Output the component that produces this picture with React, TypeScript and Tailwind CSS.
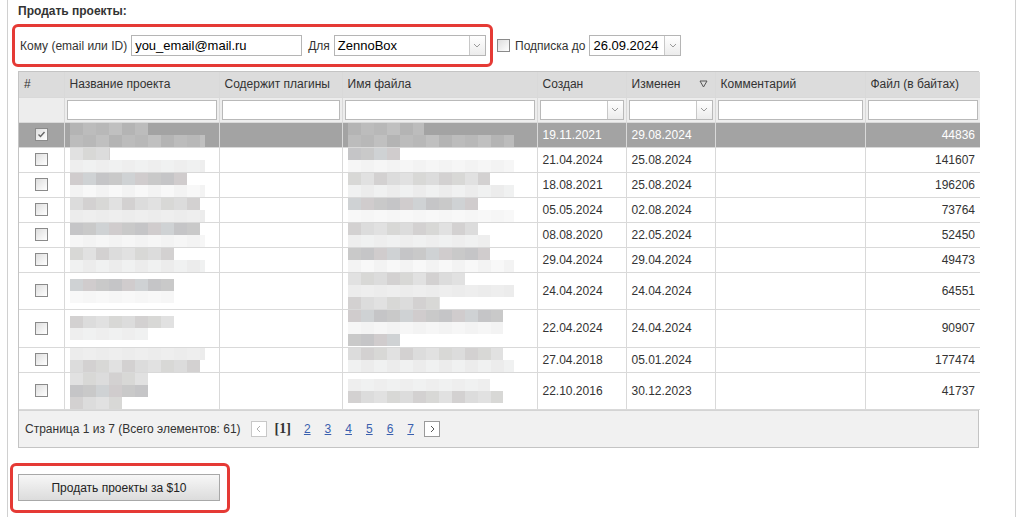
import React from "react";

type Line = { w: number; faint?: boolean };

const rows: {
  created: string;
  modified: string;
  size: string;
  h: string;
  name: Line[];
  file: Line[];
  selected?: boolean;
}[] = [
  { created: "19.11.2021", modified: "29.08.2024", size: "44836", h: "h-[25px]", name: [{ w: 78 }, { w: 135 }], file: [{ w: 76 }, { w: 166 }], selected: true },
  { created: "21.04.2024", modified: "25.08.2024", size: "141607", h: "h-[25px]", name: [{ w: 40 }, { w: 135, faint: true }], file: [{ w: 52 }, { w: 166, faint: true }] },
  { created: "18.08.2021", modified: "25.08.2024", size: "196206", h: "h-[25px]", name: [{ w: 117 }, { w: 135, faint: true }], file: [{ w: 142 }, { w: 166, faint: true }] },
  { created: "05.05.2024", modified: "02.08.2024", size: "73764", h: "h-[25px]", name: [{ w: 130 }, { w: 135, faint: true }], file: [{ w: 130 }, { w: 166, faint: true }] },
  { created: "08.08.2020", modified: "22.05.2024", size: "52450", h: "h-[25px]", name: [{ w: 130 }, { w: 135, faint: true }], file: [{ w: 130 }, { w: 142, faint: true }] },
  { created: "29.04.2024", modified: "29.04.2024", size: "49473", h: "h-[25px]", name: [{ w: 104 }, { w: 135, faint: true }], file: [{ w: 142 }, { w: 166, faint: true }] },
  { created: "24.04.2024", modified: "24.04.2024", size: "64551", h: "h-[37px]", name: [{ w: 104 }, { w: 104, faint: true }], file: [{ w: 117 }, { w: 166, faint: true }, { w: 92 }] },
  { created: "22.04.2024", modified: "24.04.2024", size: "90907", h: "h-[38px]", name: [{ w: 104 }, { w: 78, faint: true }], file: [{ w: 155 }, { w: 155, faint: true }, { w: 52 }] },
  { created: "27.04.2018", modified: "05.01.2024", size: "177474", h: "h-[25px]", name: [{ w: 135, faint: true }, { w: 130 }], file: [{ w: 155 }, { w: 166, faint: true }] },
  { created: "22.10.2016", modified: "30.12.2023", size: "41737", h: "h-[36px]", name: [{ w: 78 }, { w: 78 }, { w: 52 }], file: [{ w: 142, faint: true }, { w: 155 }] },
];

const shades = ["#c9c9c9", "#d3d1d1", "#cfd2d4", "#d8d8d6", "#c5c5c7", "#dcdcdc", "#d0cccd", "#e1e1e1"];
const faintShades = ["#eeeeee", "#f3f3f3", "#ececec", "#f6f6f6", "#f0f1f1", "#f8f8f8"];

function Blur({ lines, seed, dark }: { lines: Line[]; seed: number; dark?: boolean }) {
  return (
    <div className="flex flex-col">
      {lines.map((l, i) => {
        const n = Math.ceil(l.w / 13);
        return (
          <div key={i} className="flex h-[12px]">
            {Array.from({ length: n }).map((_, j) => {
              const pal = l.faint ? faintShades : shades;
              let c = pal[(seed * 7 + i * 5 + j * 3 + ((j * j) % 4)) % pal.length];
              if (dark) c = ["#b4b4b4", "#bcbcbc", "#b8b8b8", "#c0c0c0"][(j + i) % 4];
              const w = j === n - 1 ? l.w - 13 * (n - 1) : 13;
              return <div key={j} style={{ width: w, background: c }} />;
            })}
          </div>
        );
      })}
    </div>
  );
}

function Check({ checked }: { checked?: boolean }) {
  return (
    <div className="w-[13px] h-[13px] border border-[#8a8a8a] bg-gradient-to-br from-[#dedede] to-white flex items-center justify-center mx-auto">
      {checked && (
        <svg width="9" height="9" viewBox="0 0 9 9">
          <path d="M1.5 4.5 L3.5 6.5 L7.5 2" stroke="#666" strokeWidth="1.4" fill="none" />
        </svg>
      )}
    </div>
  );
}

function DropBtn() {
  return (
    <div className="w-[16px] h-full border-l border-[#c8c8c8] bg-gradient-to-b from-white to-[#ececec] flex items-center justify-center">
      <svg width="8" height="5" viewBox="0 0 8 5">
        <path d="M1 1 L4 4 L7 1" stroke="#9a9a9a" strokeWidth="1" fill="none" />
      </svg>
    </div>
  );
}

const cell = "border border-[#d9d9d9] px-[5px]";

export default function App() {
  return (
    <div className="w-[1024px] h-[517px] bg-white overflow-hidden font-['Liberation_Sans',Arial,sans-serif] text-[12px] text-[#333]">
      <div className="ml-[7px] w-[1009px] h-full border-x border-[#d0d0d0] pt-[4px] pl-[4px]">
        <div className="pl-[6px] font-bold text-[12px] leading-[14px] text-[#333]">Продать проекты:</div>

        <div className="flex items-center mt-[6px]">
          <div className="w-[481px] h-[43px] border-[3px] border-[#e53a35] rounded-[6px] flex items-center pl-[5px] gap-[4px]">
            <span>Кому (email или ID)</span>
            <div className="w-[171px] h-[21px] border border-[#b5b5b5] flex items-center px-[3px] text-[13px] text-black">you_email@mail.ru</div>
            <span className="ml-[2px]">Для</span>
            <div className="w-[152px] h-[21px] border border-[#b5b5b5] flex items-center text-[13px] text-black">
              <span className="flex-1 px-[3px]">ZennoBox</span>
              <DropBtn />
            </div>
          </div>
          <div className="ml-[4px] w-[13px] h-[13px] border border-[#8a8a8a] bg-gradient-to-br from-[#dedede] to-white" />
          <span className="ml-[5px]">Подписка до</span>
          <div className="ml-[4px] w-[92px] h-[21px] border border-[#b5b5b5] flex items-center text-[13px] text-black">
            <span className="flex-1 px-[3px]">26.09.2024</span>
            <DropBtn />
          </div>
        </div>

        <div className="mt-[4px] ml-[6px] w-[961px] border border-[#c4c4c4]">
          <table className="w-full border-collapse table-fixed">
            <colgroup>
              <col className="w-[45px]" />
              <col className="w-[155px]" />
              <col className="w-[123px]" />
              <col className="w-[195px]" />
              <col className="w-[89px]" />
              <col className="w-[89px]" />
              <col className="w-[150px]" />
              <col className="w-[115px]" />
            </colgroup>
            <thead>
              <tr className="h-[25px] bg-[#dcdcdc] text-left">
                <th className={`${cell} border-t-0 border-l-0 font-normal`}>#</th>
                <th className={`${cell} border-t-0 font-normal`}>Название проекта</th>
                <th className={`${cell} border-t-0 font-normal`}>Содержит плагины</th>
                <th className={`${cell} border-t-0 font-normal`}>Имя файла</th>
                <th className={`${cell} border-t-0 font-normal`}>Создан</th>
                <th className={`${cell} border-t-0 font-normal`}>
                  <div className="flex items-center justify-between">
                    <span>Изменен</span>
                    <svg width="9" height="8" viewBox="0 0 9 8" className="mr-[2px]">
                      <path d="M1 1 H8 L4.5 7 Z" stroke="#555" strokeWidth="1" fill="none" />
                    </svg>
                  </div>
                </th>
                <th className={`${cell} border-t-0 font-normal`}>Комментарий</th>
                <th className={`${cell} border-t-0 border-r-0 font-normal`}>Файл (в байтах)</th>
              </tr>
              <tr className="h-[25px] bg-[#ededed]">
                <td className={`${cell} border-l-0`} />
                {[0, 1, 2].map((i) => (
                  <td key={i} className="border border-[#d9d9d9] px-[2px]">
                    <div className="h-[20px] bg-white border border-[#b9b9b9]" />
                  </td>
                ))}
                {[0, 1].map((i) => (
                  <td key={i} className="border border-[#d9d9d9] px-[2px]">
                    <div className="h-[20px] bg-white border border-[#b9b9b9] flex justify-end">
                      <DropBtn />
                    </div>
                  </td>
                ))}
                <td className="border border-[#d9d9d9] px-[2px]">
                  <div className="h-[20px] bg-white border border-[#b9b9b9]" />
                </td>
                <td className="border border-[#d9d9d9] border-r-0 px-[2px]">
                  <div className="h-[20px] bg-white border border-[#b9b9b9]" />
                </td>
              </tr>
            </thead>
            <tbody>
              {rows.map((r, i) => (
                <tr key={i} className={`${r.h} ${r.selected ? "bg-[#a3a3a3] text-white" : "bg-white text-[#333]"}`}>
                  <td className={`${cell} border-l-0`}>
                    <Check checked={r.selected} />
                  </td>
                  <td className={cell}>
                    <Blur lines={r.name} seed={i} dark={r.selected} />
                  </td>
                  <td className={cell} />
                  <td className={cell}>
                    <Blur lines={r.file} seed={i + 3} dark={r.selected} />
                  </td>
                  <td className={cell}>{r.created}</td>
                  <td className={cell}>{r.modified}</td>
                  <td className={cell} />
                  <td className={`${cell} border-r-0 text-right`}>{r.size}</td>
                </tr>
              ))}
            </tbody>
          </table>
          <div className="h-[37px] bg-[#f1f1f1] border-t border-[#d4d4d4] flex items-center pl-[6px] gap-[4px]">
            <span>Страница 1 из 7 (Всего элементов: 61)</span>
            <div className="ml-[6px] w-[16px] h-[16px] border border-[#c8c8c8] bg-white flex items-center justify-center">
              <svg width="5" height="8" viewBox="0 0 5 8">
                <path d="M4 1 L1 4 L4 7" stroke="#b0b0b0" strokeWidth="1" fill="none" />
              </svg>
            </div>
            <span className="ml-[4px] font-['Liberation_Serif',serif] font-bold text-[14px] text-[#333]">[1]</span>
            <div className="flex ml-[9px] gap-[14px] text-[#3a5fae] underline">
              <span>2</span>
              <span>3</span>
              <span>4</span>
              <span>5</span>
              <span>6</span>
              <span>7</span>
            </div>
            <div className="ml-[6px] w-[16px] h-[16px] border border-[#9a9a9a] bg-white flex items-center justify-center">
              <svg width="5" height="8" viewBox="0 0 5 8">
                <path d="M1 1 L4 4 L1 7" stroke="#555" strokeWidth="1" fill="none" />
              </svg>
            </div>
          </div>
        </div>

        <div className="mt-[15px] -ml-[2px] w-[220px] h-[50px] border-[3px] border-[#e53a35] rounded-[6px] flex items-center pl-[5px]">
          <div className="w-[202px] h-[27px] border border-[#a8a8a8] bg-gradient-to-b from-[#f7f7f7] to-[#dcdcdc] flex items-center justify-center text-[12px] text-[#222]">
            Продать проекты за $10
          </div>
        </div>
      </div>
    </div>
  );
}
